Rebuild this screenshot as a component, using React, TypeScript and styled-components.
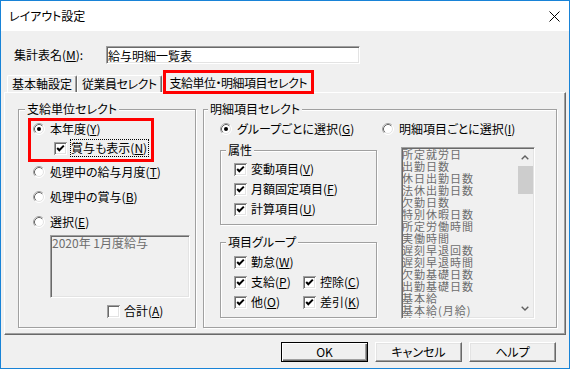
import React from "react";
import styled, { createGlobalStyle, css } from "styled-components";

const Global = createGlobalStyle`
  html, body { margin: 0; padding: 0; background: #fff; }
  body {
    font-family: "Noto Sans CJK JP", "Noto Sans", sans-serif;
    font-size: 12px;
    color: #000;
    font-feature-settings: "palt";
  }
  * { box-sizing: border-box; }
  u { text-underline-offset: 1px; }
`;

const Window = styled.div`
  width: 570px;
  height: 369px;
  border: 1px solid #1883d7;
  background: #f0f0f0;
  display: flex;
  flex-direction: column;
  overflow: hidden;
`;

const TitleBar = styled.div`
  height: 30px;
  flex: none;
  background: #fff;
  display: flex;
  align-items: center;
  justify-content: space-between;
  padding: 0 9px 0 8px;
`;

const Title = styled.span`
  font-size: 12px;
  line-height: 16px;
`;

const Body = styled.div`
  display: flex;
  flex-direction: column;
  padding: 0 3px;
`;

const NameRow = styled.div`
  margin-top: 15px;
  height: 18px;
  display: flex;
  align-items: center;
  padding-left: 10px;
`;

const NameLabel = styled.span`
  width: 92px;
  line-height: 16px;
`;

const NameInput = styled.input`
  width: 254px;
  height: 18px;
  margin: 0;
  padding: 0 0 0 1px;
  border: 1px solid;
  border-color: #a0a0a0 #fff #fff #a0a0a0;
  box-shadow: inset 1px 1px 0 #696969, inset -1px -1px 0 #e3e3e3;
  background: #fff;
  font: inherit;
  font-size: 12px;
  line-height: 16px;
  color: #000;
  outline: none;
`;

const TabStrip = styled.div`
  margin-top: 6px;
  height: 22px;
  display: flex;
  align-items: flex-end;
  padding-left: 3px;
  position: relative;
  z-index: 1;
`;

const Tab = styled.div<{ $active?: boolean; $tight?: boolean }>`
  height: 17px;
  padding: 0 4px;
  line-height: 16px;
  white-space: nowrap;
  letter-spacing: ${(p) => (p.$tight ? "-0.5px" : "0")};
  border-top: 1px solid #fff;
  border-left: 1px solid #fff;
  border-right: 1px solid #696969;
  box-shadow: inset -1px 0 0 #a0a0a0;
  border-radius: 2px 2px 0 0;
  background: #f0f0f0;
  ${(p) =>
    p.$active &&
    css`
      position: relative;
      height: 23px;
      margin: 0 0 -1px 2px;
      padding: 4px 5px 0 5px;
      &::after {
        content: "";
        position: absolute;
        inset: -1px -2px -1px -2px;
        border: 3px solid #f00;
        pointer-events: none;
      }
    `}
`;

const Panel = styled.div`
  height: 243px;
  border: 1px solid;
  border-color: #fff #696969 #696969 #fff;
  box-shadow: inset -1px -1px 0 #a0a0a0;
  display: grid;
  grid-template-columns: 178px 354px;
  column-gap: 7px;
  padding: 9px 0 6px 13px;
`;

const Group = styled.fieldset`
  margin: 0;
  padding: 0;
  min-width: 0;
  border: 1px solid #a0a0a0;
  box-shadow: inset 1px 1px 0 #fff, 1px 1px 0 #fff;
`;

const Legend = styled.legend<{ $indent: number }>`
  margin-left: ${(p) => p.$indent}px;
  padding: 0 2px;
  line-height: 14px;
  background: #f0f0f0;
  white-space: nowrap;
`;

const LeftBody = styled.div`
  display: flex;
  flex-direction: column;
  align-items: flex-start;
  padding: 2px 0 0 14px;
`;

const Highlight = styled.div`
  margin-left: -5px;
  width: 126px;
  border: 3px solid #f00;
  padding: 0 0 3px 2px;
  display: flex;
  flex-direction: column;
  gap: 3px;
`;

const OptionRow = styled.div<{ $indent?: number; $top?: number }>`
  height: 16px;
  display: flex;
  align-items: center;
  white-space: nowrap;
  line-height: 16px;
  margin-left: ${(p) => p.$indent ?? 0}px;
  margin-top: ${(p) => p.$top ?? 0}px;
`;

const RadioStack = styled.div`
  margin-top: 2px;
  display: flex;
  flex-direction: column;
  gap: 9px;
`;

const ListBox = styled.div<{ $w: number; $h: number; $left: number; $top: number }>`
  width: ${(p) => p.$w}px;
  height: ${(p) => p.$h}px;
  margin-left: ${(p) => p.$left}px;
  margin-top: ${(p) => p.$top}px;
  border: 1px solid;
  border-color: #a0a0a0 #fff #fff #a0a0a0;
  box-shadow: inset 1px 1px 0 #696969, inset -1px -1px 0 #e3e3e3;
  background: #f0f0f0;
  color: #6d6d6d;
  display: flex;
  overflow: hidden;
`;

const SmallListText = styled.div`
  padding: 0 0 0 1px;
  line-height: 14px;
  font-feature-settings: normal;
`;

const ItemColumn = styled.div`
  flex: 1;
  overflow: hidden;
  font-feature-settings: normal;
`;

const Item = styled.div`
  height: 12px;
  line-height: 12px;
  font-size: 11px;
  letter-spacing: 1px;
  white-space: nowrap;
`;

const ScrollBar = styled.div`
  width: 16px;
  margin: 1px 1px 1px 0;
  display: flex;
  flex-direction: column;
  background: #f0f0f0;
`;

const ScrollArrow = styled.div`
  height: 17px;
  display: flex;
  align-items: center;
  justify-content: center;
`;

const ScrollTrack = styled.div`
  flex: 1;
  display: flex;
  flex-direction: column;
  align-items: flex-end;
`;

const ScrollThumb = styled.div`
  width: 15px;
  height: 28px;
  background: #cdcdcd;
`;

const RightBody = styled.div`
  display: grid;
  grid-template-columns: 157px 153px;
  column-gap: 5px;
  row-gap: 6px;
  padding: 5px 0 0 16px;
  align-items: start;
`;

const SubColumn = styled.div`
  display: flex;
  flex-direction: column;
  gap: 10px;
`;

const SubBody = styled.div<{ $top: number }>`
  display: flex;
  flex-direction: column;
  gap: 4px;
  padding: ${(p) => p.$top}px 0 7px 13px;
`;

const CheckGrid = styled.div`
  display: grid;
  grid-template-columns: 69px auto;
`;

const FocusText = styled.span`
  outline: 1px dotted #000;
  outline-offset: 0;
  padding: 0 1px 0 0;
`;

const RadioSvg = styled.svg`
  flex: none;
  margin-right: 5px;
`;

const CheckSvg = styled.svg`
  flex: none;
  margin-right: 4px;
`;

const ButtonRow = styled.div`
  margin-top: 7px;
  display: flex;
  justify-content: flex-end;
  gap: 7px;
  padding-right: 10px;
`;

const Button = styled.div<{ $default?: boolean }>`
  width: 87px;
  height: 20px;
  display: flex;
  align-items: center;
  justify-content: center;
  line-height: 16px;
  background: #f0f0f0;
  border: 1px solid;
  border-color: #fff #696969 #696969 #fff;
  box-shadow: inset -1px -1px 0 #a0a0a0, inset 1px 1px 0 #e3e3e3;
  ${(p) =>
    p.$default &&
    css`
      border-color: #000;
      box-shadow: inset 1px 1px 0 #fff, inset -1px -1px 0 #696969, inset -2px -2px 0 #a0a0a0;
    `}
`;

const Radio = ({ checked }: { checked?: boolean }) => (
  <RadioSvg width="12" height="12" viewBox="0 0 12 12">
    <circle cx="6" cy="6" r="5.5" fill="#fff" stroke="#fff" />
    <path d="M2.11 9.89 A5.5 5.5 0 0 1 9.89 2.11" fill="none" stroke="#a0a0a0" />
    <circle cx="6" cy="6" r="4.5" fill="#fff" stroke="#e3e3e3" />
    <path d="M2.82 9.18 A4.5 4.5 0 0 1 9.18 2.82" fill="none" stroke="#696969" />
    {checked && <circle cx="6" cy="6" r="2" fill="#000" />}
  </RadioSvg>
);

const Check = ({ checked }: { checked?: boolean }) => (
  <CheckSvg width="13" height="13" viewBox="0 0 13 13" shapeRendering="crispEdges">
    <rect x="0" y="0" width="13" height="13" fill="#fff" />
    <path d="M0.5 12.5 V0.5 H12.5" stroke="#a0a0a0" fill="none" />
    <path d="M1.5 11.5 V1.5 H11.5" stroke="#696969" fill="none" />
    <path d="M12.5 1 V12.5 H1" stroke="#fff" fill="none" />
    <path d="M11.5 2 V11.5 H2" stroke="#e3e3e3" fill="none" />
    {checked && (
      <path d="M3.2 6 L5.3 8.2 L9.8 3.6" stroke="#000" strokeWidth="2" fill="none" shapeRendering="auto" />
    )}
  </CheckSvg>
);

const Chevron = ({ down }: { down?: boolean }) => (
  <svg width="8" height="5" viewBox="0 0 8 5">
    <path
      d={down ? "M0.7 0.7 L4 4 L7.3 0.7" : "M0.7 4.3 L4 1 L7.3 4.3"}
      stroke="#606060"
      strokeWidth="1.4"
      fill="none"
    />
  </svg>
);

const items = [
  "所定就労日",
  "出勤日数",
  "休日出勤日数",
  "法休出勤日数",
  "欠勤日数",
  "特別休暇日数",
  "所定労働時間",
  "実働時間",
  "遅刻早退回数",
  "遅刻早退時間",
  "欠勤基礎日数",
  "出勤基礎日数",
  "基本給",
  "基本給(月給)",
  "基本給(日給)",
];

export default function App() {
  return (
    <>
      <Global />
      <Window>
        <TitleBar>
          <Title>レイアウト設定</Title>
          <svg width="11" height="11" viewBox="0 0 11 11">
            <path d="M0.5 0.5 L10.5 10.5 M10.5 0.5 L0.5 10.5" stroke="#000" strokeWidth="1" />
          </svg>
        </TitleBar>
        <Body>
          <NameRow>
            <NameLabel>
              集計表名(<u>M</u>):
            </NameLabel>
            <NameInput readOnly value="給与明細一覧表" />
          </NameRow>
          <TabStrip>
            <Tab>基本軸設定</Tab>
            <Tab $tight>従業員セレクト</Tab>
            <Tab $active $tight>
              支給単位・明細項目セレクト
            </Tab>
          </TabStrip>
          <Panel>
            <Group>
              <Legend $indent={6}>支給単位セレクト</Legend>
              <LeftBody>
                <Highlight>
                  <OptionRow>
                    <Radio checked />
                    <span>
                      本年度(<u>Y</u>)
                    </span>
                  </OptionRow>
                  <OptionRow $indent={21}>
                    <Check checked />
                    <FocusText>
                      賞与も表示(<u>N</u>)
                    </FocusText>
                  </OptionRow>
                </Highlight>
                <RadioStack>
                  <OptionRow>
                    <Radio />
                    <span>
                      処理中の給与月度(<u>T</u>)
                    </span>
                  </OptionRow>
                  <OptionRow>
                    <Radio />
                    <span>
                      処理中の賞与(<u>B</u>)
                    </span>
                  </OptionRow>
                  <OptionRow>
                    <Radio />
                    <span>
                      選択(<u>E</u>)
                    </span>
                  </OptionRow>
                </RadioStack>
                <ListBox $w={140} $h={63} $left={17} $top={5}>
                  <SmallListText>2020年 1月度給与</SmallListText>
                </ListBox>
                <OptionRow $indent={74} $top={5}>
                  <Check />
                  <span>
                    合計(<u>A</u>)
                  </span>
                </OptionRow>
              </LeftBody>
            </Group>
            <Group>
              <Legend $indent={4}>明細項目セレクト</Legend>
              <RightBody>
                <OptionRow>
                  <Radio checked />
                  <span>
                    グループごとに選択(<u>G</u>)
                  </span>
                </OptionRow>
                <OptionRow>
                  <Radio />
                  <span>
                    明細項目ごとに選択(<u>I</u>)
                  </span>
                </OptionRow>
                <SubColumn>
                  <Group>
                    <Legend $indent={5}>属性</Legend>
                    <SubBody $top={4}>
                      <OptionRow>
                        <Check checked />
                        <span>
                          変動項目(<u>V</u>)
                        </span>
                      </OptionRow>
                      <OptionRow>
                        <Check checked />
                        <span>
                          月額固定項目(<u>F</u>)
                        </span>
                      </OptionRow>
                      <OptionRow>
                        <Check checked />
                        <span>
                          計算項目(<u>U</u>)
                        </span>
                      </OptionRow>
                    </SubBody>
                  </Group>
                  <Group>
                    <Legend $indent={5}>項目グループ</Legend>
                    <SubBody $top={5}>
                      <OptionRow>
                        <Check checked />
                        <span>
                          勤怠(<u>W</u>)
                        </span>
                      </OptionRow>
                      <CheckGrid>
                        <OptionRow>
                          <Check checked />
                          <span>
                            支給(<u>P</u>)
                          </span>
                        </OptionRow>
                        <OptionRow>
                          <Check checked />
                          <span>
                            控除(<u>C</u>)
                          </span>
                        </OptionRow>
                      </CheckGrid>
                      <CheckGrid>
                        <OptionRow>
                          <Check checked />
                          <span>
                            他(<u>O</u>)
                          </span>
                        </OptionRow>
                        <OptionRow>
                          <Check checked />
                          <span>
                            差引(<u>K</u>)
                          </span>
                        </OptionRow>
                      </CheckGrid>
                    </SubBody>
                  </Group>
                </SubColumn>
                <ListBox $w={134} $h={172} $left={19} $top={4}>
                  <ItemColumn>
                    {items.map((t) => (
                      <Item key={t}>{t}</Item>
                    ))}
                  </ItemColumn>
                  <ScrollBar>
                    <ScrollArrow>
                      <Chevron />
                    </ScrollArrow>
                    <ScrollTrack>
                      <ScrollThumb />
                    </ScrollTrack>
                    <ScrollArrow>
                      <Chevron down />
                    </ScrollArrow>
                  </ScrollBar>
                </ListBox>
              </RightBody>
            </Group>
          </Panel>
          <ButtonRow>
            <Button $default>OK</Button>
            <Button>キャンセル</Button>
            <Button>ヘルプ</Button>
          </ButtonRow>
        </Body>
      </Window>
    </>
  );
}
